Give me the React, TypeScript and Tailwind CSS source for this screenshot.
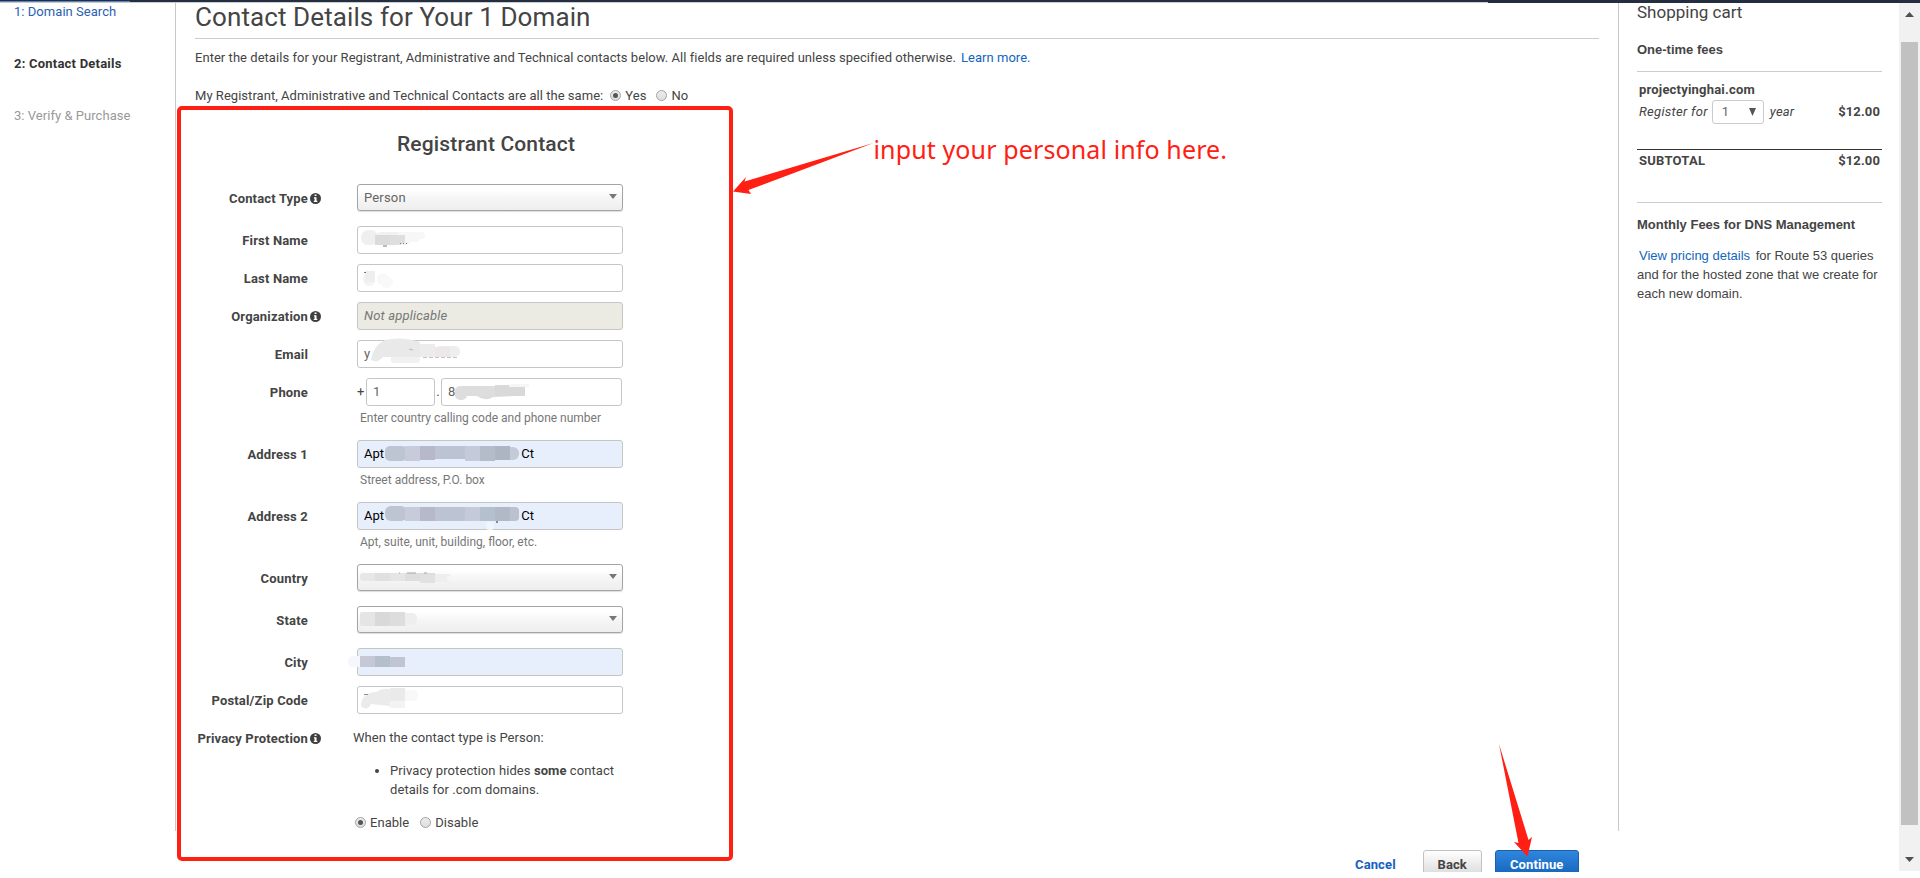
import React from "react";

type Shape = [number, number, number, number, string, number?];

/* Smudges painted over private values, in the field's own coordinates. */
function Smudge({ shapes, children }: { shapes: Shape[]; children?: React.ReactNode }) {
  return (
    <svg className="pointer-events-none absolute -top-px -left-px overflow-visible" width="266" height="28">
      {shapes.map(([x, y, w, h, fill, r], i) => (
        <rect key={i} x={x} y={y} width={w} height={h} rx={r ?? 0} fill={fill} />
      ))}
      {children}
    </svg>
  );
}

function Info() {
  return (
    <svg width="11" height="11" viewBox="0 0 11 11" className="ml-[2px] shrink-0">
      <circle cx="5.5" cy="5.5" r="5.5" fill="#3f3f3f" />
      <path d="M4.6 1.6h1.9v1.5H4.6zM3.9 4.3h2.6v3.5h.8v1.2H3.8V7.8h.8V5.4h-.7z" fill="#fff" />
    </svg>
  );
}

function Radio({ on }: { on?: boolean }) {
  return (
    <span className="flex size-[11px] shrink-0 items-center justify-center rounded-full border border-[#a3a3a3] bg-linear-to-b from-[#ececec] to-[#dedede]">
      {on && <span className="size-[5px] rounded-full bg-[#555]" />}
    </span>
  );
}

function Row({ label, info, gap, children }: { label: string; info?: boolean; gap: string; children: React.ReactNode }) {
  return (
    <div className={"flex shrink-0 items-start " + gap}>
      <div className="flex h-[29px] w-[162px] shrink-0 items-center">
        <span className="w-[113px] text-right font-bold tracking-[0.17px] whitespace-nowrap">{label}</span>
        {info && <Info />}
      </div>
      {children}
    </div>
  );
}

function Field({ className = "", children }: { className?: string; children?: React.ReactNode }) {
  return (
    <div className={"relative flex h-7 items-center rounded-[3px] border border-[#c5c5c5] pb-px pl-[6px] text-[#666] " + (className || "w-[266px] bg-white")}>
      {children}
    </div>
  );
}

function Select({ children }: { children?: React.ReactNode }) {
  return (
    <div className="relative flex h-[27px] w-[266px] items-center justify-between rounded-[3px] border border-[#a5a5a5] bg-linear-to-b from-white from-20% via-[#f6f6f6] via-50% to-[#eeeeee] pr-[5px] pl-[6px] text-[#666] shadow-[0_1px_1px_#ddd]">
      <span className="tracking-[0.17px]">{children}</span>
      <svg width="8" height="5" className="mb-[3px]">
        <path d="M0 0h8L4 5z" fill="#777" />
      </svg>
    </div>
  );
}

const FILLED = "w-[266px] bg-[#e8effc] !text-black";

export default function App() {
  return (
    <div className="relative flex h-[878px] w-[1920px] flex-col overflow-hidden bg-white font-[Roboto,sans-serif] text-[13px] leading-[19px] tracking-[0.04px] text-[#444]">
      <div className="flex h-[3px] shrink-0 items-start bg-[#c9cbce]">
        <div className="h-[2px] w-[130px] border-b border-[#5b83bd] bg-[#232f3e]" />
        <div className="h-[2px] w-[1358px] bg-[#232f3e]" />
        <div className="h-[3px] flex-1 bg-[#232f3e]" />
      </div>
      <div className="flex h-[869px] shrink-0 overflow-hidden">
        <nav className="-mt-px flex h-[829px] w-[176px] shrink-0 flex-col gap-[33px] border-r border-[#c8c8c8] pl-[14px]">
          <span className="text-[#2a61b4]">1: Domain Search</span>
          <span className="font-bold tracking-[0.22px] text-[#333]">2: Contact Details</span>
          <span className="text-[#999]">3: Verify &amp; Purchase</span>
        </nav>

        <main className="flex w-[1442px] shrink-0 flex-col pl-[19px]">
          <h1 className="h-[36px] w-[1404px] shrink-0 border-b border-[#ccc] text-[26px] leading-[28px] tracking-[0.1px] whitespace-nowrap">
            Contact Details for Your 1 Domain
          </h1>
          <p className="mt-[9px] shrink-0">
            Enter the details for your Registrant, Administrative and Technical contacts below. All fields are required unless specified otherwise.
            <span className="ml-[5px] text-[#1166bb]">Learn more.</span>
          </p>
          <div className="mt-[18px] flex shrink-0 items-center">
            <span>My Registrant, Administrative and Technical Contacts are all the same:</span>
            <span className="ml-[7px] flex items-center gap-1 pt-px"><Radio on />Yes</span>
            <span className="ml-[10px] flex items-center gap-1 pt-px"><Radio />No</span>
          </div>

          <h2 className="mt-[26px] mb-[27px] ml-[202px] shrink-0 text-[21px] leading-[26px] font-medium tracking-[0.15px]">Registrant Contact</h2>

          <Row label="Contact Type" info gap="h-[42px]"><Select>Person</Select></Row>
          <Row label="First Name" gap="h-[38px]">
            <Field>
              <Smudge shapes={[[4, 4, 17, 15, "#efefef", 7], [19, 6, 34, 13, "#f1f1f1", 5], [40, 6, 28, 7, "#f7f7f7", 3], [40, 9, 22, 7, "#f7f7f7", 2], [18, 9, 15, 10, "#dadbdb"]]}>
                <path d="M33 9h15v7q-6 4-15 3z" fill="#dedede" />
                <path d="M26 20h4M43 17.500h1M46 17.500h1M49 17.500h1" stroke="#777" />
              </Smudge>
            </Field>
          </Row>
          <Row label="Last Name" gap="h-[38px]">
            <Field>
              <Smudge shapes={[[6, 8, 12, 14, "#f4f4f4", 6], [20, 10, 12, 11, "#f8f8f8", 5], [24, 13, 12, 11, "#f9f9f9", 5], [8, 7, 10, 11, "#eeeeee"]]}>
                <path d="M7 8.500h2" stroke="#777" />
              </Smudge>
            </Field>
          </Row>
          <Row label="Organization" info gap="h-[38px]">
            <Field className="w-[266px] bg-[#ebebe4] italic !text-[#777]"><span className="tracking-[0.17px]">Not applicable</span></Field>
          </Row>
          <Row label="Email" gap="h-[38px]">
            <Field>
              y
              <Smudge shapes={[[34, 8, 29, 15, "#f1f1f1", 3], [78, 6, 25, 11, "#eeeeee", 5], [63, 4, 15, 13, "#ececec"], [78, 7, 15, 10, "#ece7e8"]]}>
                <path d="M14 20Q16 6 28 0Q45-4 63 2V17H26Q20 24 14 20Z" fill="#e9e9e9" />
                <path d="M52 9l4 1" stroke="#bbb" />
                <path d="M66 17.500h35" stroke="#c4c4c4" strokeDasharray="4 2" />
              </Smudge>
            </Field>
          </Row>
          <Row label="Phone" gap="h-[62px]">
            <div className="flex flex-col">
              <div className="flex items-center">
                <span className="w-[9px] pb-[2px]">+</span>
                <Field className="w-[69px] bg-white">1</Field>
                <span className="w-[6px] pb-[2px] text-center">.</span>
                <Field className="w-[181px] bg-white">
                  8
                  <Smudge shapes={[[14, 8, 12, 14, "#dedede", 5], [20, 8, 64, 10, "#dddddd"], [54, 7, 30, 11, "#d9d9d9"], [68, 6, 20, 3, "#f6f6f6", 1]]}>
                    <path d="M36 18q8 6 16 1l20-1z" fill="#dbdbdb" />
                  </Smudge>
                </Field>
              </div>
              <span className="ml-[3px] pt-[3px] text-[12px] tracking-normal text-[#777]">Enter country calling code and phone number</span>
            </div>
          </Row>
          <Row label="Address 1" gap="h-[62px]">
            <div className="flex flex-col">
              <Field className={FILLED}>
                <span>Apt</span><span className="ml-[137px]">Ct</span>
                <Smudge shapes={[[28, 6, 22, 15, "#bcc5d1", 5], [145, 7, 17, 13, "#c4cad7", 6], [48, 6, 15, 15, "#c7cbdb"], [63, 6, 15, 14, "#b7b8ca"], [78, 6, 30, 13, "#bcc3d2"], [108, 6, 15, 15, "#c5cadb"], [123, 6, 15, 15, "#b4bcca"], [138, 6, 15, 14, "#acb5c1"]]} />
              </Field>
              <span className="ml-[3px] pt-[3px] text-[12px] tracking-normal text-[#777]">Street address, P.O. box</span>
            </div>
          </Row>
          <Row label="Address 2" gap="h-[62px]">
            <div className="flex flex-col">
              <Field className={FILLED}>
                <span>Apt</span><span className="ml-[137px]">Ct</span>
                <Smudge shapes={[[28, 4, 22, 15, "#bcc5d1", 6], [145, 5, 17, 14, "#bcc1d0", 4], [48, 5, 15, 14, "#c7cbdb"], [63, 5, 15, 14, "#b7b8ca"], [78, 5, 30, 14, "#bcc3d2"], [108, 5, 15, 14, "#c5cadb"], [123, 5, 15, 14, "#b4c0ce"], [138, 5, 15, 14, "#b1b8c8"], [129, 20, 8, 8, "#f1f5fd", 3]]}>
                  <path d="M139 20h2" stroke="#222" />
                </Smudge>
              </Field>
              <span className="ml-[3px] pt-[3px] text-[12px] tracking-normal text-[#777]">Apt, suite, unit, building, floor, etc.</span>
            </div>
          </Row>
          <Row label="Country" gap="h-[42px]">
            <div className="relative">
              <Select />
              <div className="absolute top-px left-px">
                <Smudge shapes={[[3, 9, 20, 8, "#e7e7e7", 3], [18, 9, 15, 8, "#dfe0df"], [33, 9, 15, 8, "#e5e5e5"], [48, 9, 30, 8, "#dddddd"], [63, 11, 15, 8, "#e0e2e1"], [78, 10, 15, 8, "#eeeeee"], [90, 12, 10, 5, "#f6f6f6", 2]]}>
                  <path d="M42 9h1M50 9h9M67 9h3" stroke="#a5a5b0" />
                </Smudge>
              </div>
            </div>
          </Row>
          <Row label="State" gap="h-[42px]">
            <div className="relative">
              <Select />
              <div className="absolute top-px left-px">
                <Smudge shapes={[[44, 7, 16, 12, "#eeeeee", 5], [3, 6, 17, 14, "#e5e5e5", 2], [18, 6, 15, 14, "#d9d9d9"], [33, 6, 15, 14, "#dcdddc"], [5, 20, 43, 4, "#f2f2f2"]]} />
              </div>
            </div>
          </Row>
          <Row label="City" gap="h-[38px]">
            <Field className={FILLED}>
              <Smudge shapes={[[-9, 8, 18, 11, "#f5f7fc", 5], [3, 8, 15, 11, "#c6c8d6"], [18, 8, 15, 11, "#b4bfcb"], [33, 9, 15, 10, "#bfc5d3"]]} />
            </Field>
          </Row>
          <Row label="Postal/Zip Code" gap="h-[38px]">
            <Field>
              <Smudge shapes={[[44, 4, 17, 11, "#f8f8f8", 5], [33, 2, 15, 13, "#eaeaea"], [33, 15, 15, 7, "#f3f3f3"]]}>
                <path d="M4 18Q6 6 20 6Q24 2 33 3V20L14 18Q10 26 4 20Z" fill="#ebebeb" />
                <path d="M7 8.500h4" stroke="#a98b7b" />
              </Smudge>
            </Field>
          </Row>
          <Row label="Privacy Protection" info gap="h-[90px]">
            <div className="-ml-[4px] flex flex-col pt-[4px]">
              <p>When the contact type is Person:</p>
              <ul className="mt-[14px] ml-[37px] w-[240px] list-disc tracking-[0.08px]">
                <li>Privacy protection hides <b>some</b> contact details for .com domains.</li>
              </ul>
              <div className="mt-[14px] ml-[2px] flex items-center">
                <span className="flex items-center gap-1"><Radio on />Enable</span>
                <span className="ml-[11px] flex items-center gap-1"><Radio />Disable</span>
              </div>
            </div>
          </Row>
          <div className="mt-[36px] flex shrink-0 items-center pl-[1160px] font-bold tracking-[0.12px]">
            <span className="pb-[2px] text-[#1660bf]">Cancel</span>
            <div className="ml-[27px] flex h-[30px] w-[59px] items-center justify-center rounded-[3px] border border-[#c2c2c2] bg-linear-to-b from-white to-[#d5d5d5] pb-px">Back</div>
            <div className="ml-[13px] flex h-[30px] w-[84px] items-center justify-center rounded-[3px] border border-[#1a5fb0] bg-linear-to-b from-[#2f86dd] to-[#1160b8] pb-px text-white">Continue</div>
          </div>
        </main>

        <aside className="flex h-[828px] w-[281px] shrink-0 flex-col border-l border-[#c8c8c8] pr-[17px] pl-[18px]">
          <h3 className="text-[17px] leading-[18px] tracking-normal">Shopping cart</h3>
          <h4 className="mt-[19px] font-['Liberation_Sans',sans-serif] font-bold tracking-normal">One-time fees</h4>
          <div className="mt-[12px] border-t border-[#ccc] px-[2px] pt-[8px]">
            <p className="font-bold tracking-[0.2px]">projectyinghai.com</p>
            <div className="flex h-[25px] items-center">
              <span className="tracking-[0.3px] italic">Register for</span>
              <span className="ml-1 flex h-6 w-[52px] items-center justify-between rounded-[3px] border border-[#ccc] pr-[7px] pl-[9px] text-[#666]">
                1
                <svg width="7" height="8"><path d="M0 0h7L3.500 8z" fill="#555" /></svg>
              </span>
              <span className="ml-[6px] tracking-[0.2px] italic">year</span>
              <b className="ml-auto tracking-[0.12px]">$12.00</b>
            </div>
          </div>
          <div className="mt-[25px] flex justify-between border-t border-[#333] px-[2px] pt-px font-bold tracking-[0.12px]">
            <span className="tracking-[0.25px]">SUBTOTAL</span>
            <span>$12.00</span>
          </div>
          <h4 className="mt-[32px] border-t border-[#ccc] pt-[12px] font-['Liberation_Sans',sans-serif] font-bold tracking-normal">Monthly Fees for DNS Management</h4>
          <p className="mt-[12px] font-['Liberation_Sans',sans-serif] tracking-normal whitespace-nowrap">
            <span className="mx-[2px] text-[#1166bb]">View pricing details</span> for Route 53 queries
            <br />and for the hosted zone that we create for
            <br />each new domain.
          </p>
        </aside>

        <div className="flex h-[868px] w-[21px] shrink-0 flex-col items-center bg-[#f1f1f1]">
          <svg width="9" height="5" className="mt-[9px] shrink-0"><path d="M0 5h9L4.500 0z" fill="#505050" /></svg>
          <div className="mt-[25px] h-[783px] w-[17px] shrink-0 bg-[#c1c1c1]" />
          <svg width="9" height="5" className="mt-[32px] shrink-0"><path d="M0 0h9L4.500 5z" fill="#505050" /></svg>
        </div>
      </div>

      <div className="absolute top-[106px] left-[177px] h-[755px] w-[556px] rounded-[5px] border-4 border-[#ff2013]" />
      <svg className="absolute top-0 left-0" width="1920" height="878">
        <path d="M873.500 143L744.500 181.500L746 177L733 191.500L751 194L748.500 190Z" fill="#ff2013" />
        <path d="M1499 744L1518.500 843L1514 842L1527.500 856.500L1532 837L1528.500 840Z" fill="#ff2013" />
      </svg>
      <div className="absolute top-[131px] left-[873.5px] font-['Noto_Sans',sans-serif] text-[25px] leading-[36px] tracking-[0.12px] whitespace-nowrap text-[#ff2013]">
        input your personal info here.
      </div>
    </div>
  );
}
